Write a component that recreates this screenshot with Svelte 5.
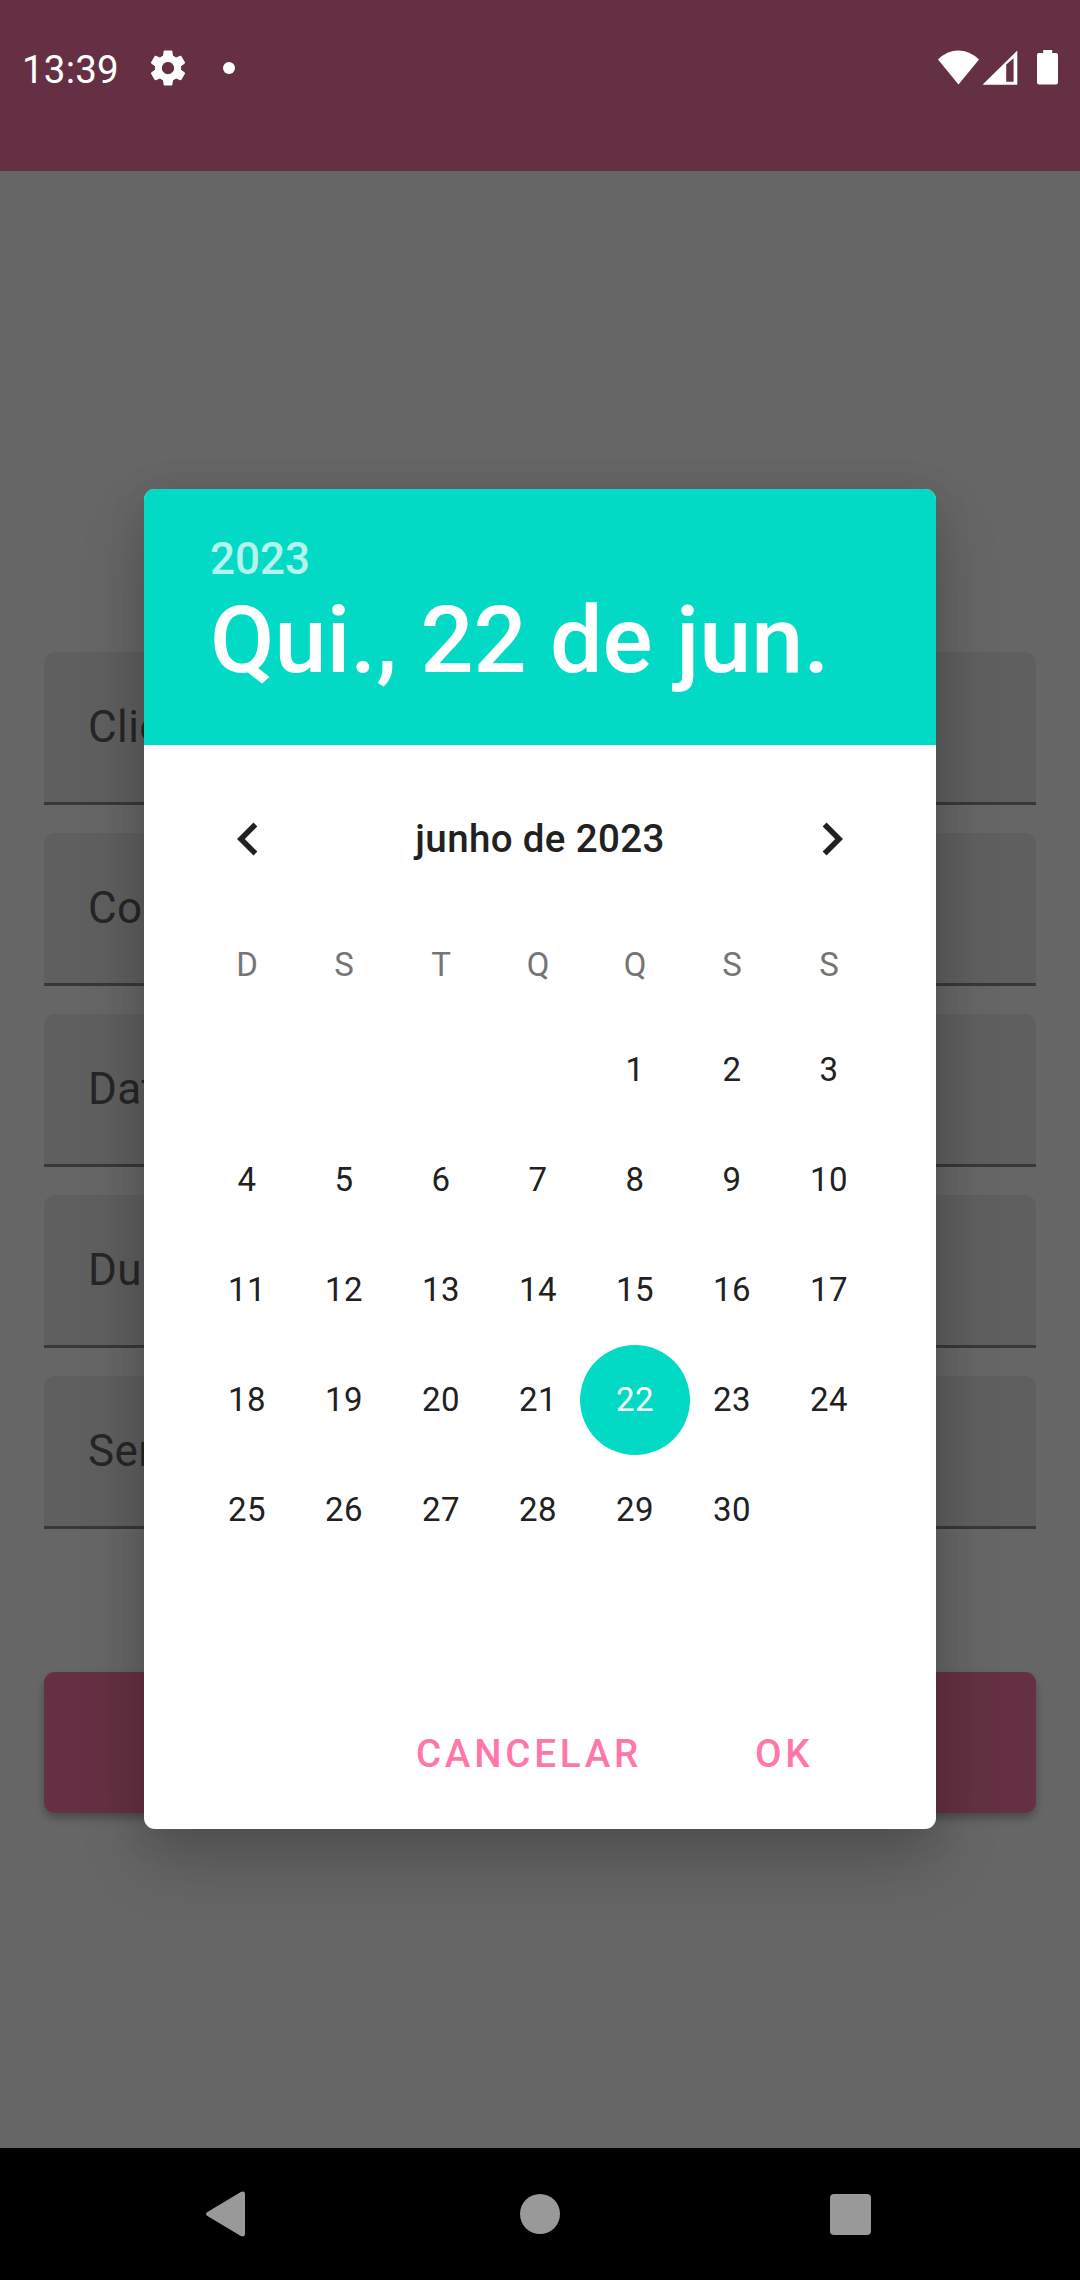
<script>
  const fields = ['Cliente', 'Cor', 'Data', 'Dur.', 'Serv.'];
  const weekdays = ['D', 'S', 'T', 'Q', 'Q', 'S', 'S'];
  const leadingBlanks = 4;
  const daysInMonth = 30;
  let selected = $state(22);
  const cells = [
    ...Array(leadingBlanks).fill(null),
    ...Array.from({ length: daysInMonth }, (_, i) => i + 1),
  ];
</script>

<div class="screen">
  <header class="appbar"></header>

  <main class="form">
    {#each fields as label}
      <div class="field"><span>{label}</span></div>
    {/each}
    <div class="submit"></div>
  </main>

  <div class="scrim">
    <section class="dialog">
      <div class="head">
        <div class="year">2023</div>
        <div class="date">Qui., 22 de jun.</div>
      </div>
      <div class="month">
        <svg width="66" height="66" viewBox="0 0 24 24"><path d="M15.41 7.41 14 6l-6 6 6 6 1.41-1.41L10.83 12z" /></svg>
        <span>junho de 2023</span>
        <svg width="66" height="66" viewBox="0 0 24 24"><path d="M8.59 16.59 10 18l6-6-6-6-1.41 1.41L13.17 12z" /></svg>
      </div>
      <div class="week">
        {#each weekdays as d}<span>{d}</span>{/each}
      </div>
      <div class="days">
        {#each cells as day}
          {#if day}
            <button class="day" class:selected={day === selected} onclick={() => (selected = day)}><span>{day}</span></button>
          {:else}
            <i></i>
          {/if}
        {/each}
      </div>
      <div class="actions">
        <button class="cancel">CANCELAR</button>
        <button class="ok">OK</button>
      </div>
    </section>
  </div>

  <div class="status">
    <span class="clock">13:39</span>
    <svg class="gear" width="42" height="42" viewBox="0 0 24 24"><path d="M19.43 12.98c.04-.32.07-.64.07-.98s-.03-.66-.07-.98l2.11-1.65c.19-.15.24-.42.12-.64l-2-3.46c-.12-.22-.39-.3-.61-.22l-2.49 1c-.52-.4-1.08-.73-1.69-.98l-.38-2.65C14.46 2.18 14.25 2 14 2h-4c-.25 0-.46.18-.49.42l-.38 2.65c-.61.25-1.17.59-1.69.98l-2.49-1c-.23-.09-.49 0-.61.22l-2 3.46c-.13.22-.07.49.12.64l2.11 1.65c-.04.32-.07.65-.07.98s.03.66.07.98l-2.11 1.65c-.19.15-.24.42-.12.64l2 3.46c.12.22.39.3.61.22l2.49-1c.52.4 1.08.73 1.69.98l.38 2.65c.03.24.24.42.49.42h4c.25 0 .46-.18.49-.42l.38-2.65c.61-.25 1.17-.59 1.69-.98l2.49 1c.23.09.49 0 .61-.22l2-3.46c.12-.22.07-.49-.12-.64l-2.11-1.65zM12 15.5c-1.93 0-3.5-1.57-3.5-3.5s1.57-3.5 3.5-3.5 3.5 1.57 3.5 3.5-1.57 3.5-3.5 3.5z" /></svg>
    <span class="dot"></span>
    <svg class="signals" width="122" height="36" viewBox="0 0 122 36">
      <path d="M0 9.5Q9 .5 20.3 .5T41 9.5L20.5 34.5z" />
      <path fill-rule="evenodd" d="M79.3 .5V34.7H44.5zM68.2 14.5V31.7H75.6V8.3z" />
      <path d="M105.2 0h9v3H118q2 0 2 2v27.5q0 2-2 2h-17q-2 0-2-2V5q0-2 2-2h4.2z" />
    </svg>
  </div>

  <nav class="nav">
    <svg width="44" height="50" viewBox="0 0 44 50"><path d="M3 23.3 36.8 3Q41 1.5 41 5v40q0 3.5-4.2 2L3 26.7q-2-1.7 0-3.4z" /></svg>
    <span class="home"></span>
    <span class="recent"></span>
  </nav>
</div>

<style>
  :global(body) { margin: 0; }
  .screen {
    position: relative;
    width: 1080px;
    height: 2280px;
    overflow: hidden;
    display: flex;
    flex-direction: column;
    background: #fff;
    font-family: Roboto, sans-serif;
  }
  .appbar { height: 171px; background: #fc78a9; flex: none; }
  .form {
    flex: 1;
    padding: 481px 44px 0;
    display: flex;
    flex-direction: column;
    gap: 28px;
  }
  .field {
    box-sizing: border-box;
    height: 153px;
    border-bottom: 3px solid #8c8c8c;
    border-radius: 11px 11px 0 0;
    background: #eee;
    padding-left: 44px;
    display: flex;
    align-items: center;
    font-size: 44px;
    letter-spacing: .4px;
    color: #606060;
  }
  .submit {
    height: 141px;
    margin-top: 115px;
    border-radius: 11px;
    background: #fc78a9;
    box-shadow: 0 5px 8px rgba(0, 0, 0, .28);
  }
  .scrim {
    position: absolute;
    inset: 0 0 132px;
    background: rgba(0, 0, 0, .6);
    padding-top: 489px;
    box-sizing: border-box;
    display: flex;
    justify-content: center;
    align-items: flex-start;
  }
  .dialog {
    width: 792px;
    height: 1340px;
    border-radius: 11px;
    overflow: hidden;
    background: #fff;
    box-shadow: 0 33px 66px rgba(0, 0, 0, .2), 0 4px 40px rgba(0, 0, 0, .09);
    display: flex;
    flex-direction: column;
  }
  .head {
    box-sizing: border-box;
    height: 256px;
    flex: none;
    background: #03dac5;
    color: #fff;
    padding: 44px 66px 0;
    font-weight: 500;
  }
  .year { font-size: 44px; line-height: 52px; opacity: .7; }
  .date { font-size: 93.5px; line-height: 110px; white-space: nowrap; }
  .month {
    height: 188px;
    padding: 0 71px;
    display: flex;
    align-items: center;
    justify-content: space-between;
    font-size: 38.5px;
    font-weight: 500;
    letter-spacing: .35px;
    color: #212121;
    fill: #212121;
  }
  .month span { padding-bottom: 2px; }
  .week {
    height: 62px;
    padding: 0 0 2px 54.5px;
    display: grid;
    grid-template-columns: repeat(7, 97px);
    align-items: center;
    text-align: center;
    font-size: 33px;
    color: #757575;
  }
  .days {
    margin-top: 18px;
    padding-left: 54px;
    display: grid;
    grid-template-columns: repeat(7, 97px);
    grid-auto-rows: 110px;
    justify-items: center;
  }
  button { border: 0; background: none; padding: 0; font-family: inherit; }
  .day {
    width: 110px;
    margin: 0 -7px;
    padding: 0 0 2px 1px;
    border-radius: 50%;
    font-size: 33px;
    letter-spacing: .5px;
    color: #212121;
  }
  .day.selected { background: #03dac5; color: #fff; }
  .actions {
    margin-top: auto;
    height: 150px;
    padding: 0 122.5px 2px 0;
    box-sizing: border-box;
    display: flex;
    align-items: center;
    justify-content: flex-end;
    gap: 113px;
  }
  .actions button { font-size: 38.5px; font-weight: 500; letter-spacing: 3.8px; color: #ff77a9; }
  .status {
    position: absolute;
    inset: 0 0 auto;
    height: 135px;
    display: flex;
    align-items: center;
    padding: 0 20px 0 22px;
    color: #fff;
    fill: #fff;
  }
  .clock { font-size: 38.5px; width: 125px; padding-top: 3px; letter-spacing: .2px; }
  .dot { width: 12px; height: 12px; border-radius: 50%; background: #fff; margin-left: 34px; }
  .signals { margin-left: auto; }
  .nav {
    position: relative;
    height: 132px;
    flex: none;
    box-sizing: border-box;
    padding: 0 209px 0 204px;
    background: #000;
    display: flex;
    align-items: center;
    justify-content: space-between;
    fill: #999;
  }
  .home { width: 40px; height: 40px; border-radius: 50%; background: #999; margin-left: 2px; }
  .recent { width: 41px; height: 41px; border-radius: 4px; background: #999; }
</style>
